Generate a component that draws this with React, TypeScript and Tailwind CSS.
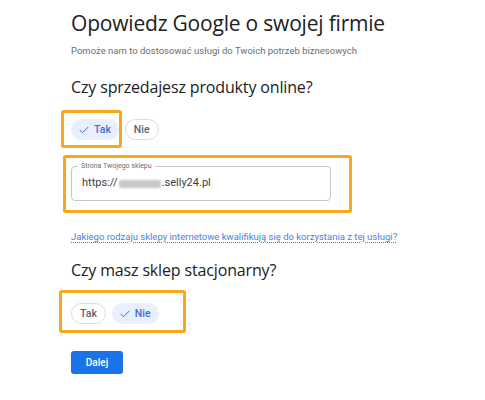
import React from 'react';

const Check = () => (
  <svg width="12" height="12" viewBox="0 0 24 24" fill="none" stroke="currentColor" strokeWidth="2" strokeLinecap="round" strokeLinejoin="round">
    <path d="M4 12.5l5 5L20 6.5" />
  </svg>
);

const Chip: React.FC<{ label: string; selected?: boolean }> = ({ label, selected }) =>
  selected ? (
    <div className="flex items-center gap-[4px] h-[21px] pl-[7px] pr-[8px] rounded-full bg-[#e8f0fe] text-[#3f6fd1] text-[10.5px] font-medium">
      <Check />
      <span>{label}</span>
    </div>
  ) : (
    <div className="flex items-center h-[21px] px-[8px] rounded-full border border-[#dadce0] text-[#5f6368] text-[10.5px] font-medium">
      {label}
    </div>
  );

const Mark: React.FC<{ className: string }> = ({ className }) => (
  <div className={`absolute border-[3px] border-[#f9a51d] rounded-[3px] pointer-events-none ${className}`} />
);

export default function App() {
  return (
    <div className="relative w-[485px] h-[400px] bg-white font-['Roboto',sans-serif] pl-[71px]">
      <h1 className="pt-[9px] text-[21px] leading-[28px] text-[#202124] font-['Open_Sans',sans-serif] tracking-[-0.2px]">
        Opowiedz Google o swojej firmie
      </h1>
      <p className="mt-[7px] text-[9.5px] leading-[14px] text-[#6b6e72]">
        Pomoże nam to dostosować usługi do Twoich potrzeb biznesowych
      </p>
      <h2 className="mt-[18px] text-[16px] leading-[22px] text-[#202124] font-['Open_Sans',sans-serif] tracking-[-0.15px]">
        Czy sprzedajesz produkty online?
      </h2>
      <div className="mt-[21px] flex gap-[6px]">
        <Chip label="Tak" selected />
        <Chip label="Nie" />
      </div>

      <div className="relative mt-[26px] w-[260px] h-[35px] border border-[#c6c6c6] rounded-[4px] flex items-center pl-[10px]">
        <span className="absolute -top-[6px] left-[6px] bg-white px-[3px] text-[7px] leading-[10px] text-[#6b6e72]">
          Strona Twojego sklepu
        </span>
        <span className="text-[11px] text-[#3c4043] flex items-center">
          https://
          <span className="inline-block w-[42px] h-[8px] bg-[#c8c9cc] rounded-[2px] blur-[1px] mx-[1px]" />
          .selly24.pl
        </span>
      </div>

      <a className="block mt-[29px] text-[9.5px] leading-[14px] text-[#4a7fdb] underline decoration-dotted underline-offset-2">
        Jakiego rodzaju sklepy internetowe kwalifikują się do korzystania z tej usługi?
      </a>

      <h2 className="mt-[15px] text-[16px] leading-[22px] text-[#202124] font-['Open_Sans',sans-serif] tracking-[-0.15px]">
        Czy masz sklep stacjonarny?
      </h2>
      <div className="mt-[22px] flex gap-[6px]">
        <Chip label="Tak" />
        <Chip label="Nie" selected />
      </div>

      <button className="mt-[27px] w-[52px] h-[23px] rounded-[3px] bg-[#1a73e8] text-white text-[10px] font-medium">
        Dalej
      </button>

      <Mark className="left-[61px] top-[110px] w-[61px] h-[38px]" />
      <Mark className="left-[63px] top-[155px] w-[289px] h-[58px]" />
      <Mark className="left-[59px] top-[290px] w-[127px] h-[43px]" />
    </div>
  );
}
